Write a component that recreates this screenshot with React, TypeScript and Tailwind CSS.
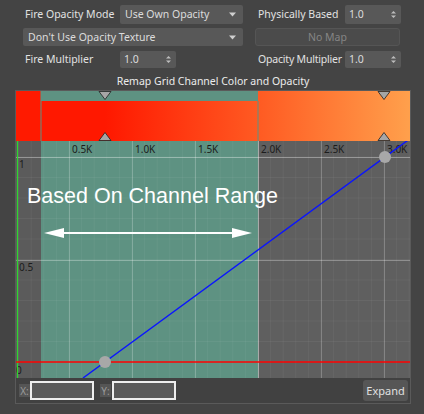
import React from "react";

const W = 394;
const H = 287;

function Spinner({ value }: { value: string }) {
  return (
    <div className="w-[56px] h-full bg-[#585858] rounded-[2px] flex items-center pl-[4px] pr-[5px] text-[#dcdcdc]">
      <span className="flex-1">{value}</span>
      <svg width="5" height="9" viewBox="0 0 5 9">
        <polygon points="0,3.5 2.5,1 5,3.5" fill="#bdbdbd" />
        <polygon points="0,5.5 2.5,8 5,5.5" fill="#bdbdbd" />
      </svg>
    </div>
  );
}

function Dropdown({ value, className }: { value: string; className: string }) {
  return (
    <div className={`h-full bg-[#585858] rounded-[2px] flex items-center pl-[5px] pr-[7px] text-[#dcdcdc] ${className}`}>
      <span className="flex-1 whitespace-nowrap">{value}</span>
      <svg width="7" height="5" viewBox="0 0 7 5">
        <polygon points="0,0.5 7,0.5 3.5,4.5" fill="#cfcfcf" />
      </svg>
    </div>
  );
}

function Chart() {
  const minorV: number[] = [];
  for (let k = 0; k < 40; k++) {
    const x = -10 + 12.6 * k;
    if (x > 0 && x < W) minorV.push(x);
  }
  const minorH: number[] = [];
  for (let k = 0; k < 20; k++) {
    const y = 66 + 20.5 * k;
    if (y > 50 && y < H) minorH.push(y);
  }
  const majorV = [53, 116, 179, 242, 305, 368];
  const labels = ["0.5K", "1.0K", "1.5K", "2.0K", "2.5K", "3.0K"];
  const tri = (x: number, down: boolean) =>
    down ? (
      <polygon points={`${x - 6},0.5 ${x + 6},0.5 ${x},8.5`} fill="#a6a6a6" stroke="#222" strokeWidth="0.8" />
    ) : (
      <polygon points={`${x - 6},49.5 ${x + 6},49.5 ${x},41.5`} fill="#a6a6a6" stroke="#222" strokeWidth="0.8" />
    );
  return (
    <svg width={W} height={H} viewBox={`0 0 ${W} ${H}`} className="block">
      <defs>
        <linearGradient id="grad" gradientUnits="userSpaceOnUse" x1="89" y1="0" x2="394" y2="0">
          <stop offset="0" stopColor="#ff1800" />
          <stop offset="0.5" stopColor="#ff5a22" />
          <stop offset="1" stopColor="#ffa04c" />
        </linearGradient>
        <clipPath id="gclip">
          <rect x="0" y="50" width={W} height={H - 50} />
        </clipPath>
      </defs>
      <rect x="0" y="0" width="25" height="50" fill="#ff1a00" />
      <rect x="25" y="0" width={W - 25} height="50" fill="url(#grad)" />
      <rect x="25" y="0" width="217" height="10" fill="#5e9282" />
      <line x1="25" y1="0" x2="25" y2="50" stroke="#5e9282" strokeWidth="1" />
      <line x1="242" y1="10" x2="242" y2="50" stroke="#5e9282" strokeWidth="1" />
      {tri(89, true)}
      {tri(89, false)}
      {tri(368, true)}
      {tri(368, false)}
      <rect x="0" y="50" width="25" height={H - 50} fill="#5b5b5b" />
      <rect x="25" y="50" width="217" height={H - 50} fill="#5e9282" />
      <rect x="242" y="50" width={W - 242} height={H - 50} fill="#5f5f5f" />
      {minorV.map((x) => (
        <line key={"mv" + x} x1={x} y1="50" x2={x} y2={H} stroke="rgba(255,255,255,0.05)" strokeWidth="1" />
      ))}
      {minorH.map((y) => (
        <line key={"mh" + y} x1="0" y1={y} x2={W} y2={y} stroke="rgba(255,255,255,0.05)" strokeWidth="1" />
      ))}
      {majorV.map((x) => (
        <line key={"MV" + x} x1={x + 0.5} y1="50" x2={x + 0.5} y2={H} stroke="rgba(255,255,255,0.22)" strokeWidth="1" />
      ))}
      <line x1="242.5" y1="50" x2="242.5" y2={H} stroke="rgba(255,255,255,0.3)" strokeWidth="1" />
      <line x1="0" y1="66.5" x2={W} y2="66.5" stroke="rgba(255,255,255,0.35)" strokeWidth="1" />
      <line x1="0" y1="169.5" x2={W} y2="169.5" stroke="rgba(255,255,255,0.3)" strokeWidth="1" />
      {labels.map((t, i) => (
        <text
          key={t}
          x={majorV[i] + 3}
          y="62"
          fontFamily="'Noto Sans', sans-serif"
          fontSize="10"
          fill="#1c1c1c"
        >
          {t}
        </text>
      ))}
      <text x="3" y="77" fontFamily="'Noto Sans', sans-serif" fontSize="10" fill="#1c1c1c">1</text>
      <text x="3" y="180" fontFamily="'Noto Sans', sans-serif" fontSize="10" fill="#1c1c1c">0.5</text>
      <text x="0" y="283" fontFamily="'Noto Sans', sans-serif" fontSize="10" fill="#1c1c1c">0</text>
      <line x1="1.5" y1="50" x2="1.5" y2={H} stroke="#2ed62e" strokeWidth="1.2" />
      <line x1="0" y1="271" x2={W} y2="271" stroke="#ff0000" strokeWidth="1.4" />
      <g clipPath="url(#gclip)">
        <line x1="67" y1="287" x2="394" y2="47.7" stroke="#0a14ff" strokeWidth="1.4" />
      </g>
      <circle cx="89" cy="271" r="6" fill="#a8a8a8" />
      <circle cx="369" cy="66" r="6" fill="#a8a8a8" />
      <text x="11" y="112" fontFamily="'Liberation Sans', Arial, sans-serif" fontSize="21.5" fill="#ffffff">
        Based On Channel Range
      </text>
      <line x1="44" y1="142" x2="222" y2="142" stroke="#ffffff" strokeWidth="2" />
      <polygon points="28,142 48,137 48,147" fill="#ffffff" />
      <polygon points="236,142 216,137 216,147" fill="#ffffff" />
    </svg>
  );
}

export default function App() {
  return (
    <div
      className="w-[424px] h-[414px] bg-[#444444] overflow-hidden text-[10.5px] leading-none"
      style={{ fontFamily: "'Noto Sans', 'Open Sans', sans-serif" }}
    >
      <div className="pl-[23px] pt-[5px] flex flex-col">
        <div className="flex h-[19px]">
          <div className="w-[220px] flex items-center">
            <span className="w-[97px] pl-[2px] text-[#e2e2e2] whitespace-nowrap">Fire Opacity Mode</span>
            <Dropdown value="Use Own Opacity" className="w-[123px]" />
          </div>
          <div className="ml-[12px] w-[146px] flex items-center">
            <span className="w-[90px] pl-[3px] text-[#e2e2e2] whitespace-nowrap">Physically Based</span>
            <Spinner value="1.0" />
          </div>
        </div>
        <div className="flex h-[18px] mt-[4px]">
          <Dropdown value="Don't Use Opacity Texture" className="w-[220px]" />
          <div className="ml-[12px] w-[145px] h-full rounded-[3px] bg-[#4b4b4b] border border-[#555555] flex items-center justify-center text-[#858585]">
            No Map
          </div>
        </div>
        <div className="flex h-[17px] mt-[5px]">
          <div className="w-[220px] flex items-center">
            <span className="w-[97px] pl-[2px] text-[#e2e2e2] whitespace-nowrap">Fire Multiplier</span>
            <Spinner value="1.0" />
          </div>
          <div className="ml-[12px] w-[146px] flex items-center">
            <span className="w-[90px] pl-[3px] text-[#e2e2e2] whitespace-nowrap tracking-[-0.2px]">Opacity Multiplier</span>
            <Spinner value="1.0" />
          </div>
        </div>
      </div>
      <div className="h-[22px] pt-[5px] flex items-center justify-center text-[#ececec] pl-[2px]">
        Remap Grid Channel Color and Opacity
      </div>
      <div className="ml-[15px] w-[396px] border border-[#5a5a5a] flex flex-col">
        <Chart />
        <div className="h-[25px] bg-[#414141] flex items-center pl-[3px] pr-[2px]">
          <span className="h-[13px] w-[11px] bg-[#555555] text-[#9a9a9a] flex items-center justify-center text-[10px]">X:</span>
          <div className="w-[64px] h-[19px] border-2 border-[#eeeeee] bg-[#5a5a5a]" />
          <span className="ml-[6px] h-[13px] w-[11px] bg-[#555555] text-[#9a9a9a] flex items-center justify-center text-[10px]">Y:</span>
          <div className="ml-[1px] w-[64px] h-[19px] border-2 border-[#eeeeee] bg-[#5a5a5a]" />
          <div className="ml-auto w-[45px] h-[21px] rounded-[3px] bg-[#565656] flex items-center justify-center text-[#e0e0e0] text-[11px]">
            Expand
          </div>
        </div>
      </div>
    </div>
  );
}
